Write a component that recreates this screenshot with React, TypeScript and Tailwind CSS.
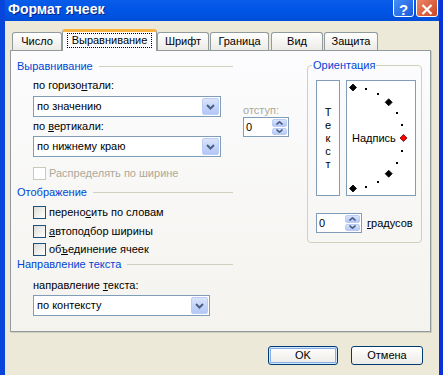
import { ReactNode } from "react"

const Chevron = ({ up, small }: { up?: boolean; small?: boolean }) =>
    small
        ? <svg width="7" height="4" viewBox="0 0 7 4">
            <path d={up ? "M0.5 3.5 L3.5 0.8 L6.5 3.5" : "M0.5 0.5 L3.5 3.2 L6.5 0.5"} fill="none" stroke="#4D6185" strokeWidth="1.6" />
        </svg>
        : <svg width="9" height="6" viewBox="0 0 9 6">
            <path d="M1 1 L4.5 4.5 L8 1" fill="none" stroke="#4D6185" strokeWidth="2" />
        </svg>

const Select = ({ value, w }: { value: string; w: string }) =>
    <div className={`${w} h-[21px] border border-[#7F9DB9] bg-white flex items-center p-[1px]`}>
        <span className="flex-1 pl-[2px]">{value}</span>
        <div className="w-[17px] h-[17px] rounded-[2px] border border-[#BBCCF5] bg-linear-to-b from-[#D9E4FD] to-[#B3C7F6] flex items-center justify-center">
            <Chevron />
        </div>
    </div>

const Spin = () =>
    <div className="w-[46px] h-[20px] border border-[#7F9DB9] bg-white flex p-[1px]">
        <span className="flex-1 pl-[1px] flex items-center">0</span>
        <div className="w-[15px] flex flex-col gap-[1px]">
            <div className="flex-1 rounded-[2px] border border-[#BBCCF5] bg-linear-to-b from-[#D9E4FD] to-[#B3C7F6] flex items-center justify-center">
                <Chevron up small />
            </div>
            <div className="flex-1 rounded-[2px] border border-[#BBCCF5] bg-linear-to-b from-[#D9E4FD] to-[#B3C7F6] flex items-center justify-center">
                <Chevron small />
            </div>
        </div>
    </div>

const Check = ({ label, disabled, mt }: { label: ReactNode; disabled?: boolean; mt: string }) =>
    <div className={`${mt} h-[14px] flex items-center`}>
        {
            disabled
                ? <span className="w-[13px] h-[13px] border border-[#CAC8BB] bg-white" />
                : <span className="w-[13px] h-[13px] border border-[#1C5180] bg-linear-to-br from-[#DCDCD7] to-white" />
        }
        <span className={`ml-[3px] ${disabled ? "text-[#ACA899]" : ""}`}>{label}</span>
    </div>

const Header = ({ title, mt }: { title: string; mt: string }) =>
    <div className={`${mt} h-[14px] flex items-center`}>
        <span className="text-[#0046D5]">{title}</span>
        <span className="flex-1 h-px bg-[#D0D0BF] ml-[6px]" />
    </div>

const Label = ({ children, mt }: { children: ReactNode; mt: string }) =>
    <div className={`${mt} h-[14px] flex items-center pl-[16px]`}><span>{children}</span></div>

const Tab = ({ title, w, ml }: { title: string; w: string; ml: string }) =>
    <div className={`${w} ${ml} h-[18px] rounded-t-[3px] border border-b-0 border-[#919B9C] bg-linear-to-b from-white to-[#ECEBE6] flex items-center justify-center`}>
        {title}
    </div>

const angles = [90, 75, 60, 45, 30, 15, 0, -15, -30, -45, -60, -75, -90]

const Dial = () =>
    <svg className="absolute inset-0" width="70" height="116" viewBox="0 0 70 116">
        {
            angles.map(a => {
                const x = 6 + 50.5 * Math.cos(a * Math.PI / 180)
                const y = 57 - 50.5 * Math.sin(a * Math.PI / 180)
                if (a % 45 === 0) {
                    const red = a === 0
                    return <polygon key={a}
                        points={`${x},${y - 3.5} ${x + 3.5},${y} ${x},${y + 3.5} ${x - 3.5},${y}`}
                        fill={red ? "#FF0000" : "#000"}
                        stroke={red ? "#7A0000" : "#000"}
                        strokeWidth="0.8" />
                }
                return <rect key={a} x={Math.round(x) - 1} y={Math.round(y) - 1} width="2" height="2" fill="#000" />
            })
        }
    </svg>

export default function App() {
    return <div className="w-[443px] h-[375px] overflow-hidden flex flex-col border-l-[5px] border-l-[#0845DA] border-r-[4px] border-r-[#0831D9] font-['Liberation_Sans',Arial,sans-serif] text-[11px] leading-[13px] text-black">

        <div className="h-[21px] shrink-0 flex items-start pl-[3px] bg-linear-to-b from-[#0A5CEA] via-[#0055E5] to-[#004ED9]">
            <span className="text-white font-bold text-[14px] leading-[18px] [text-shadow:1px_1px_#0A1E8A]">Формат ячеек</span>
            <div className="ml-auto mr-[1px] flex gap-[2px] -mt-[4px]">
                <div className="w-[21px] h-[21px] rounded-[3px] border border-white bg-linear-to-br from-[#4A93F9] to-[#1A58DA] flex items-center justify-center pt-[5px] text-white font-bold text-[15px]">?</div>
                <div className="w-[22px] h-[21px] rounded-[3px] border border-white bg-linear-to-br from-[#EE8A6B] to-[#CC4420] flex items-center justify-center pt-[5px]">
                    <svg width="12" height="11" viewBox="0 0 12 11">
                        <path d="M1.5 1 L10.5 10 M10.5 1 L1.5 10" stroke="#fff" strokeWidth="2.2" />
                    </svg>
                </div>
            </div>
        </div>

        <div className="flex-1 bg-[#ECE9D8] pl-[5px] pr-[8px]">

            <div className="h-[29px] flex items-end relative z-10">
                <Tab title="Число" w="w-[50px]" ml="ml-[2px]" />
                <div className="w-[95px] h-[22px] -mb-px rounded-t-[3px] border-x border-[#919B9C] border-t-[3px] border-t-[#F7B33D] bg-[#FCFCFE] flex justify-center pt-[1px]">
                    <span className="w-[85px] h-[15px] border border-dotted border-black flex items-center justify-center">Выравнивание</span>
                </div>
                <Tab title="Шрифт" w="w-[52px]" ml="ml-0" />
                <Tab title="Граница" w="w-[59px]" ml="ml-[1px]" />
                <Tab title="Вид" w="w-[52px]" ml="ml-[2px]" />
                <Tab title="Защита" w="w-[54px]" ml="ml-[1px]" />
            </div>

            <div className="h-[282px] border border-[#919B9C] bg-linear-to-b from-[#FCFCFE] to-[#F4F3EE] shadow-[1px_1px_0_#D0CEBF] flex pl-[6px]">

                <div className="w-[216px] flex flex-col">
                    <Header title="Выравнивание" mt="mt-[8px]" />
                    <Label mt="mt-[5px]">по горизо<u>н</u>тали:</Label>
                    <div className="mt-[4px] pl-[16px]"><Select value="по значению" w="w-[188px]" /></div>
                    <Label mt="mt-[2px]">по <u>в</u>ертикали:</Label>
                    <div className="mt-[3px] pl-[16px]"><Select value="по нижнему краю" w="w-[188px]" /></div>
                    <div className="pl-[16px]">
                        <Check mt="mt-[9px]" disabled label="Распределять по ширине" />
                    </div>
                    <Header title="Отображение" mt="mt-[5px]" />
                    <div className="pl-[16px] flex flex-col">
                        <Check mt="mt-[6px]" label={<>перено<u>с</u>ить по словам</>} />
                        <Check mt="mt-[5px]" label={<><u>а</u>втоподбор ширины</>} />
                        <Check mt="mt-[4px]" label={<>об<u>ъ</u>единение ячеек</>} />
                    </div>
                    <Header title="Направление текста" mt="mt-[1px]" />
                    <Label mt="mt-[7px]">направление <u>т</u>екста:</Label>
                    <div className="mt-[3px] pl-[16px]"><Select value="по контексту" w="w-[177px]" /></div>
                </div>

                <div className="ml-[10px] w-[46px] flex flex-col">
                    <div className="mt-[52px] h-[14px] flex items-center text-[#ACA899]">отступ:</div>
                    <Spin />
                </div>

                <fieldset className="ml-[18px] mt-[8px] w-[115px] h-[184px] border border-[#D0D0BF] rounded-[4px] pl-[8px]">
                    <legend className="-ml-[4px] px-[1px] h-[13px] text-[#0046D5]">Ориентация</legend>
                    <div className="mt-[8px] flex">
                        <div className="w-[24px] h-[116px] border border-[#7F9DB9] bg-white flex flex-col items-center justify-center leading-[13px]">
                            <span>Т</span>
                            <span>е</span>
                            <span>к</span>
                            <span>с</span>
                            <span>т</span>
                        </div>
                        <div className="relative ml-[6px] w-[70px] h-[116px] border border-[#7F9DB9] bg-white flex items-center pl-[5px]">
                            <Dial />
                            <span className="relative">Надпись</span>
                        </div>
                    </div>
                    <div className="mt-[17px] flex items-center">
                        <Spin />
                        <span className="ml-[5px]"><u>г</u>радусов</span>
                    </div>
                </fieldset>

            </div>

            <div className="mt-[14px] flex justify-end pr-[8px] gap-[13px]">
                <div className="w-[70px] h-[19px] rounded-[3px] border border-[#003C74] bg-linear-to-b from-white to-[#ECEBE6] shadow-[inset_0_0_0_1px_#CEE7FF,inset_0_0_0_2px_#89ADE4] flex items-center justify-center">OK</div>
                <div className="w-[72px] h-[19px] rounded-[3px] border border-[#003C74] bg-linear-to-b from-white to-[#ECEBE6] flex items-center justify-center">Отмена</div>
            </div>

        </div>
    </div>
}
